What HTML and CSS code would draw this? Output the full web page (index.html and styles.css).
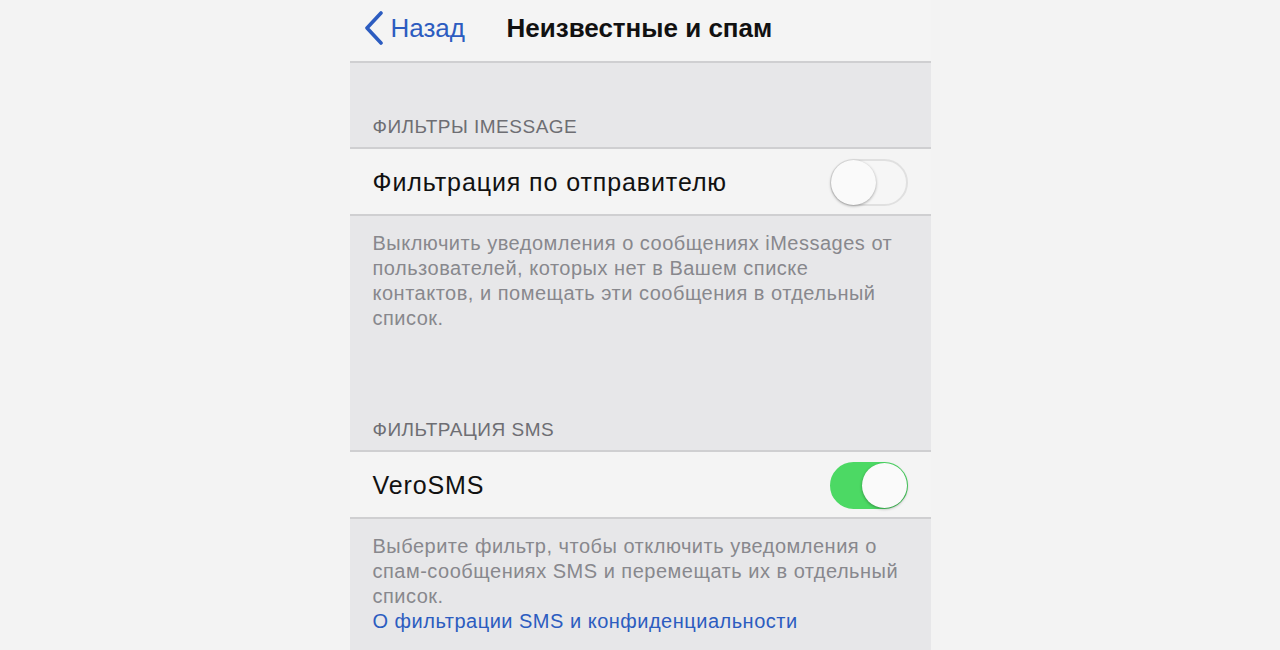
FILE: index.html
```html
<!DOCTYPE html>
<html lang="ru">
<head>
  <meta charset="UTF-8">
  <title>Неизвестные и спам</title>
  <link rel="stylesheet" href="styles.css">
</head>
<body>
  <div class="screen">
    <div class="navbar">
      <a class="back" href="#">
        <svg class="chevron" width="22" height="34" viewBox="0 0 22 34">
          <path d="M18 2 L4 17 L18 32" fill="none" stroke="#2c5cc0" stroke-width="3.6" stroke-linecap="round" stroke-linejoin="round"/>
        </svg>
        <span>Назад</span>
      </a>
      <div class="nav-title">Неизвестные и спам</div>
    </div>

    <div class="section-header">ФИЛЬТРЫ IMESSAGE</div>
    <div class="cell">
      <span class="cell-label">Фильтрация по отправителю</span>
      <span class="switch"><span class="knob"></span></span>
    </div>
    <div class="section-footer tall">Выключить уведомления о сообщениях iMessages от пользователей, которых нет в Вашем списке контактов, и помещать эти сообщения в отдельный список.</div>

    <div class="section-header">ФИЛЬТРАЦИЯ SMS</div>
    <div class="cell">
      <span class="cell-label">VeroSMS</span>
      <span class="switch on"><span class="knob"></span></span>
    </div>
    <div class="section-footer">Выберите фильтр, чтобы отключить уведомления о спам-сообщениях SMS и перемещать их в отдельный список.<br><a href="#">О фильтрации SMS и конфиденциальности</a></div>
  </div>
</body>
</html>
```

FILE: styles.css
```css
body { margin: 0; background: #f3f3f3; font-family: "Liberation Sans", Arial, sans-serif; }
.screen { width: 581px; height: 650px; margin: 0 auto; background: #e7e7e9; overflow: hidden; }

.navbar { height: 61px; background: #f4f4f4; border-bottom: 2px solid #cfcfd1; display: flex; align-items: center; padding-left: 13px; }
.back { display: flex; align-items: center; color: #2c5cc0; text-decoration: none; font-size: 26px; width: 144px; margin-top: -5px; }
.chevron { margin-right: 6px; }
.nav-title { font-size: 26px; font-weight: bold; color: #111; margin-top: -5px; }

.section-header { padding: 0 23px 9px; height: 86px; box-sizing: border-box; display: flex; align-items: flex-end; font-size: 19px; letter-spacing: 0.5px; color: #6e6e73; border-bottom: 2px solid #cfcfd1; }

.cell { height: 67px; background: #f4f4f4; border-bottom: 2px solid #cfcfd1; display: flex; align-items: center; justify-content: space-between; padding: 2px 23px 0 23px; box-sizing: border-box; }
.cell-label { font-size: 25px; letter-spacing: 0.9px; color: #111; }

.switch { width: 78px; height: 47px; border-radius: 24px; border: 2px solid #e0e0e0; box-sizing: border-box; background: #f6f6f6; position: relative; }
.switch .knob { position: absolute; left: -1px; top: -1px; width: 45px; height: 45px; border-radius: 50%; background: #fafafa; box-shadow: 0 1px 3px rgba(0,0,0,0.35); }
.switch.on { background: #4cd964; border-color: #4cd964; }
.switch.on .knob { left: auto; right: -1px; }

.section-footer { padding: 15px 23px 0; font-size: 20px; letter-spacing: 0.5px; line-height: 25px; color: #88888d; }
.section-footer.tall { height: 150px; box-sizing: border-box; }
.section-footer a { color: #2c5cc0; text-decoration: none; }
```
